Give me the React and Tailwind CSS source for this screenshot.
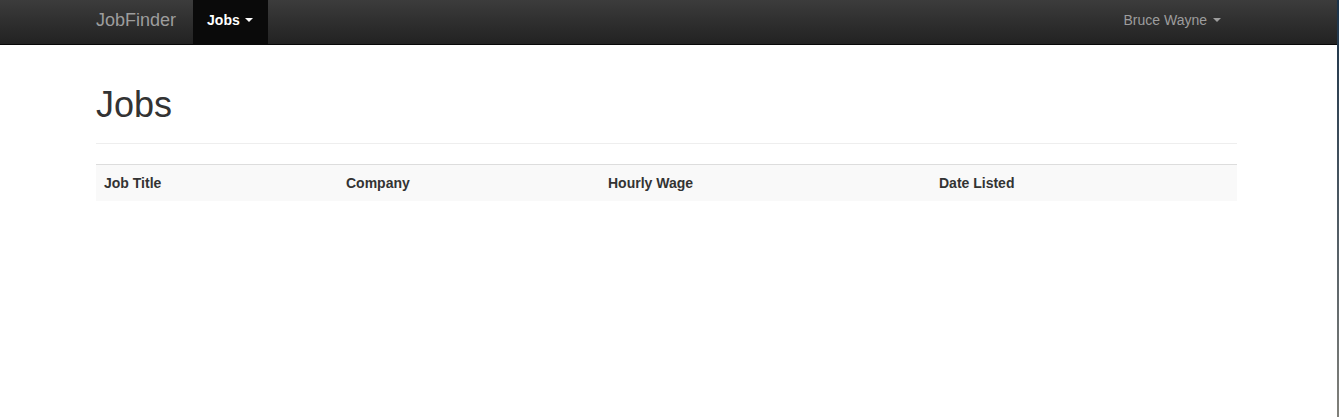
export default function App() {
  const cols = [
    { label: "Job Title", w: "w-[242px]" },
    { label: "Company", w: "w-[262px]" },
    { label: "Hourly Wage", w: "w-[331px]" },
    { label: "Date Listed", w: "flex-1" },
  ];
  return (
    <div className="flex h-[417px] w-[1339px] overflow-hidden bg-white font-['Liberation_Sans',Arial,sans-serif] text-[14px] text-[#333]">
      <div className="flex-1 flex flex-col">
        <nav className="h-[45px] box-border border-b border-[#080808] bg-gradient-to-b from-[#3c3c3c] to-[#222]">
          <div className="ml-[81px] w-[1170px] px-[15px] h-full flex justify-between">
            <div className="flex h-full">
              <a className="-ml-[15px] pl-[15px] pr-[17px] pt-[10px] text-[18px] leading-5 text-[#9d9d9d]">JobFinder</a>
              <a className="h-full pl-[14px] pr-[15px] pt-[10px] leading-5 bg-[#0a0a0a] text-white font-bold flex items-start">
                Jobs
                <span className="ml-[5px] mt-[8px] w-0 h-0 border-x-[4px] border-x-transparent border-t-[4px] border-t-white"></span>
              </a>
            </div>
            <a className="h-full px-[15px] pt-[10px] leading-5 text-[#9d9d9d] flex items-start">
              Bruce Wayne
              <span className="ml-[6px] mt-[8px] w-0 h-0 border-x-[4px] border-x-transparent border-t-[4px] border-t-[#9d9d9d]"></span>
            </a>
          </div>
        </nav>
        <div className="ml-[81px] w-[1171px] px-[15px]">
          <div className="mt-[40px] pb-[8px] border-b border-[#eee] mb-[20px]">
            <h1 className="text-[36px] leading-[1.1] font-normal text-[#333] mb-[10px]">Jobs</h1>
          </div>
          <div className="border-t border-[#ddd] bg-[#f9f9f9] flex h-[37px]">
            {cols.map((c) => (
              <div key={c.label} className={`${c.w} px-[8px] pt-[8px] leading-5 font-bold text-[#333]`}>
                {c.label}
              </div>
            ))}
          </div>
        </div>
      </div>
      <div className="w-[2px] h-full bg-gradient-to-b from-[#1b3349] to-[#80807a]"></div>
    </div>
  );
}
